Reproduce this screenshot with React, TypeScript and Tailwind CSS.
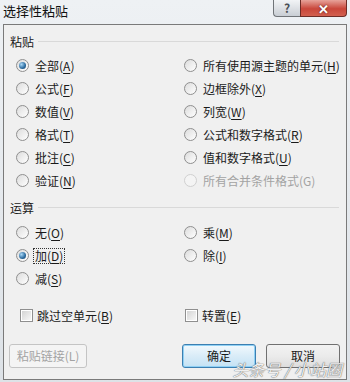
import React from "react";

const font = { fontFamily: '"Noto Sans CJK SC", "Noto Sans", sans-serif' };

function Label({ t, k, disabled, noUnderline }: { t: string; k: string; disabled?: boolean; noUnderline?: boolean }) {
  return (
    <span className={disabled ? "text-[#a3a3a3]" : "text-[#1a1a1a]"}>
      {t}(
      <span className={noUnderline ? "" : "underline underline-offset-[2px] decoration-[1px]"}>{k}</span>)
    </span>
  );
}

function Radio({ checked, disabled }: { checked?: boolean; disabled?: boolean }) {
  return (
    <span
      className={
        "relative flex h-[13px] w-[13px] shrink-0 items-center justify-center rounded-full border " +
        (disabled
          ? "border-[#d0d0d0] bg-[#f4f4f4]"
          : "border-[#8f8f8f] bg-[linear-gradient(135deg,#dcdcdc,#ffffff)]")
      }
    >
      {checked && (
        <span className="h-[7px] w-[7px] rounded-full bg-[radial-gradient(circle_at_35%_35%,#a9d8f7,#2a6a9e_60%,#173f63)]" />
      )}
    </span>
  );
}

function Check() {
  return (
    <span className="flex h-[13px] w-[13px] shrink-0 items-center justify-center border border-[#8f8f8f] bg-white">
      <span className="h-[9px] w-[9px] bg-[linear-gradient(135deg,#d4d4d4,#f7f7f7)]" />
    </span>
  );
}

function Row({ t, k, checked, disabled, focus }: { t: string; k: string; checked?: boolean; disabled?: boolean; focus?: boolean }) {
  return (
    <div className="flex h-[23px] items-center gap-[4px]">
      <Radio checked={checked} disabled={disabled} />
      <span className={focus ? "border border-dotted border-[#333] px-[1px] leading-[14px]" : "px-[2px]"}>
        <Label t={t} k={k} disabled={disabled} noUnderline={disabled} />
      </span>
    </div>
  );
}

function Header({ t }: { t: string }) {
  return (
    <div className="flex h-[17px] items-center pl-[6px] pr-[7px]">
      <span className="text-[#1a1a1a]">{t}</span>
      <span className="ml-[4px] h-px flex-1 bg-[#d9d9d9]" />
    </div>
  );
}

export default function App() {
  return (
    <div
      className="relative flex h-[382px] w-[350px] flex-col overflow-hidden bg-[linear-gradient(180deg,#eef1f4,#dde2e7)] text-[12px] leading-[16px]"
      style={font}
    >
      {/* title bar */}
      <div className="flex h-[24px] shrink-0 items-start justify-between">
        <div className="pl-[3px] pt-[2px] text-[13px] leading-[17px] text-[#111]">选择性粘贴</div>
        <div className="mr-[3px] flex h-[17px]">
          <div className="flex w-[27px] items-center justify-center rounded-bl-[4px] border border-r-0 border-t-0 border-[#707478] bg-[linear-gradient(180deg,#f2f4f6,#c9ced4)] text-[12px] font-bold leading-none text-[#4a4f55]">
            ?
          </div>
          <div className="flex w-[47px] items-center justify-center rounded-br-[4px] border border-t-0 border-[#6e2c26] bg-[linear-gradient(180deg,#e7a39a,#c9463a_55%,#d2604f)] text-[13px] font-bold leading-none text-white [text-shadow:0_0_2px_#4a1410]">
            ✕
          </div>
        </div>
      </div>

      {/* client area */}
      <div className="mx-[3px] mb-[2px] flex flex-1 flex-col border border-[#7a7a7a] bg-[#f0f0f0] pt-[8px]">
        <Header t="粘贴" />
        <div className="mt-[4px] grid grid-cols-[168px_1fr] pl-[12px]">
          <div className="flex flex-col">
            <Row t="全部" k="A" checked />
            <Row t="公式" k="F" />
            <Row t="数值" k="V" />
            <Row t="格式" k="T" />
            <Row t="批注" k="C" />
            <Row t="验证" k="N" />
          </div>
          <div className="flex flex-col">
            <Row t="所有使用源主题的单元" k="H" />
            <Row t="边框除外" k="X" />
            <Row t="列宽" k="W" />
            <Row t="公式和数字格式" k="R" />
            <Row t="值和数字格式" k="U" />
            <Row t="所有合并条件格式" k="G" disabled />
          </div>
        </div>

        <div className="mt-[7px]">
          <Header t="运算" />
        </div>
        <div className="mt-[5px] grid grid-cols-[168px_1fr] pl-[12px]">
          <div className="flex flex-col">
            <Row t="无" k="O" />
            <Row t="加" k="D" checked focus />
            <Row t="减" k="S" />
          </div>
          <div className="flex flex-col">
            <Row t="乘" k="M" />
            <Row t="除" k="I" />
          </div>
        </div>

        <div className="mt-[14px] grid h-[23px] grid-cols-[165px_1fr] items-center pl-[16px]">
          <div className="flex items-center gap-[4px]">
            <Check />
            <Label t="跳过空单元" k="B" />
          </div>
          <div className="flex items-center gap-[4px]">
            <Check />
            <Label t="转置" k="E" />
          </div>
        </div>

        <div className="mt-[17px] flex items-center px-[5px] pr-[6px]">
          <div className="flex h-[24px] w-[78px] items-center justify-center rounded-[3px] border border-[#c4c4c4] bg-[#f4f4f4] text-[#a3a3a3]">
            粘贴链接(L)
          </div>
          <div className="flex-1" />
          <div className="flex h-[24px] w-[74px] items-center justify-center rounded-[3px] border border-[#3c7fb1] bg-[linear-gradient(180deg,#f2f9fd,#d9ecf8_50%,#c4e2f4)] text-[#1a1a1a] shadow-[inset_0_0_0_1px_#8fd0f4]">
            确定
          </div>
          <div className="ml-[10px] flex h-[24px] w-[74px] items-center justify-center rounded-[3px] border border-[#707070] bg-[linear-gradient(180deg,#f2f2f2,#ebebeb_50%,#dddddd)] text-[#1a1a1a]">
            取消
          </div>
        </div>
      </div>

      {/* watermark */}
      <div className="pointer-events-none absolute bottom-[3px] right-[8px] text-[16px] italic leading-[20px] text-white/90 [text-shadow:0_0_1px_#666,0_0_1px_#666]">
        头条号 / 小站圈
      </div>
    </div>
  );
}
